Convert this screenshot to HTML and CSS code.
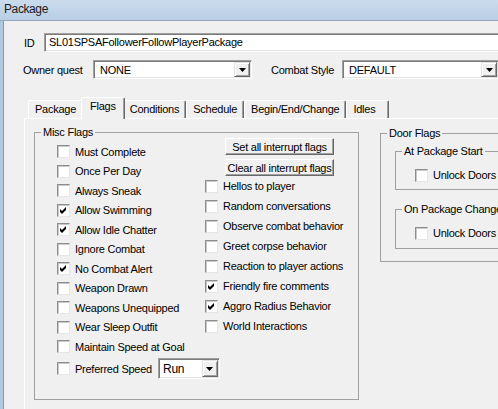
FILE: index.html
```html
<!DOCTYPE html>
<html lang="en">

<head>
    <meta charset="UTF-8">
    <title>Package</title>

    <link rel="stylesheet" href="styles.css">

</head>

<body>
    <div class="window">
        <div class="titlebar">Package</div>

        <div class="frame">
            <div class="frame-edge"></div>

            <div class="client">
                <div class="row id-row">
                    <span class="lbl lbl-id">ID</span>
                    <div class="edit">SL01SPSAFollowerFollowPlayerPackage</div>
                </div>

                <div class="row owner-row">
                    <span class="lbl lbl-quest">Owner quest</span>
                    <div class="combo combo-quest">
                        <span class="combo-text">NONE</span>
                        <span class="drop"><svg width="7" height="4" viewBox="0 0 7 4"><polygon points="0,0 7,0 3.5,4" fill="#000"/></svg></span>
                    </div>
                    <span class="lbl lbl-style">Combat Style</span>
                    <div class="combo combo-style">
                        <span class="combo-text">DEFAULT</span>
                        <span class="drop"><svg width="7" height="4" viewBox="0 0 7 4"><polygon points="0,0 7,0 3.5,4" fill="#000"/></svg></span>
                    </div>
                </div>

                <nav class="tabs">
                    <div class="tab">Package</div>
                    <div class="tab valgt">Flags</div>
                    <div class="tab">Conditions</div>
                    <div class="tab">Schedule</div>
                    <div class="tab">Begin/End/Change</div>
                    <div class="tab tab-idles">Idles</div>
                </nav>

                <section class="panel">
                    <fieldset class="group misc">
                        <legend>Misc Flags</legend>
                        <div class="misc-cols">
                            <div class="col-left">
                                <div class="check"><span class="box"></span>Must Complete</div>
                                <div class="check"><span class="box"></span>Once Per Day</div>
                                <div class="check"><span class="box"></span>Always Sneak</div>
                                <div class="check"><span class="box on"></span>Allow Swimming</div>
                                <div class="check"><span class="box on"></span>Allow Idle Chatter</div>
                                <div class="check"><span class="box"></span>Ignore Combat</div>
                                <div class="check"><span class="box on"></span>No Combat Alert</div>
                                <div class="check"><span class="box"></span>Weapon Drawn</div>
                                <div class="check"><span class="box"></span>Weapons Unequipped</div>
                                <div class="check"><span class="box"></span>Wear Sleep Outfit</div>
                                <div class="check"><span class="box"></span>Maintain Speed at Goal</div>
                                <div class="check speed">
                                    <span class="box"></span>Preferred Speed
                                    <div class="combo combo-speed">
                                        <span class="combo-text">Run</span>
                                        <span class="drop"><svg width="7" height="4" viewBox="0 0 7 4"><polygon points="0,0 7,0 3.5,4" fill="#000"/></svg></span>
                                    </div>
                                </div>
                            </div>

                            <div class="col-right">
                                <button class="btn">Set all interrupt flags</button>
                                <button class="btn btn-second">Clear all interrupt flags</button>
                                <div class="check wide"><span class="box"></span>Hellos to player</div>
                                <div class="check wide"><span class="box"></span>Random conversations</div>
                                <div class="check wide"><span class="box"></span>Observe combat behavior</div>
                                <div class="check wide"><span class="box"></span>Greet corpse behavior</div>
                                <div class="check wide"><span class="box"></span>Reaction to player actions</div>
                                <div class="check wide"><span class="box on"></span>Friendly fire comments</div>
                                <div class="check wide"><span class="box on"></span>Aggro Radius Behavior</div>
                                <div class="check wide"><span class="box"></span>World Interactions</div>
                            </div>
                        </div>
                    </fieldset>

                    <fieldset class="group door">
                        <legend>Door Flags</legend>
                        <fieldset class="group sub sub-start">
                            <legend>At Package Start</legend>
                            <div class="check"><span class="box"></span>Unlock Doors</div>
                        </fieldset>
                        <fieldset class="group sub sub-change">
                            <legend>On Package Change</legend>
                            <div class="check"><span class="box"></span>Unlock Doors</div>
                        </fieldset>
                    </fieldset>
                </section>
            </div>
        </div>
    </div>

    <script>
        // tick mark for every checked box
        document.querySelectorAll(".box.on").forEach(elm => {
            elm.innerHTML = '<svg width="7" height="7" viewBox="0 0 7 7"><polygon points="0,2 2,4 6,0 6,3 2,7 0,5" fill="#000"/></svg>';
        })
    </script>

</body></html>
```

FILE: styles.css
```css
body {
    margin: 0;
    width: 498px;
    height: 409px;
    overflow: hidden;
    background-color: #f0f0f0;
    font-family: "Liberation Sans", Arial, sans-serif;
    font-size: 11px;
    letter-spacing: -0.25px;
    color: #000;
}

.window {
    display: flex;
    flex-direction: column;
    height: 409px;
}

.titlebar {
    height: 20px;
    line-height: 18px;
    padding-left: 4px;
    font-size: 12px;
    letter-spacing: -0.4px;
    color: #1b1b1b;
    background: linear-gradient(#cadbed, #bacfe5);
    border-bottom: 1px solid #93a6bc;
    flex: none;
}

.frame {
    display: flex;
    flex: 1;
    min-height: 0;
}

.frame-edge {
    width: 3px;
    background-color: #b2c8e0;
    border-right: 1px solid #8599b1;
    flex: none;
}

.client {
    flex: 1;
    display: flex;
    flex-direction: column;
    padding: 12px 0 0 20px;
    min-width: 0;
}

.row {
    display: flex;
    align-items: center;
    height: 19px;
    flex: none;
}

.lbl {
    flex: none;
    white-space: nowrap;
}

.lbl-id {
    width: 20px;
}

.owner-row {
    margin-top: 8px;
}

.lbl-quest {
    width: 70px;
    margin-left: -1px;
}

.lbl-style {
    width: 71px;
    margin-left: 19px;
}

/* sunken white fields */
.edit,
.combo {
    box-sizing: border-box;
    height: 19px;
    background-color: #fff;
    border: 1px solid;
    border-color: #a0a0a0 #fff #fff #a0a0a0;
    box-shadow: inset 1px 1px 0 #7a7a7a, inset -1px -1px 0 #e3e3e3;
    flex: none;
}

.edit {
    width: 470px;
    padding-left: 4px;
    line-height: 17px;
    white-space: nowrap;
}

.combo {
    display: flex;
    align-items: center;
    padding: 1px;
}

.combo-text {
    flex: 1;
    padding-left: 5px;
    white-space: nowrap;
}

.combo-quest {
    width: 159px;
}

.combo-style {
    width: 157px;
}

.drop {
    box-sizing: border-box;
    width: 16px;
    height: 15px;
    display: flex;
    align-items: center;
    justify-content: center;
    background-color: #f0f0f0;
    border: 1px solid;
    border-color: #e3e3e3 #696969 #696969 #e3e3e3;
    box-shadow: inset 1px 1px 0 #fff, inset -1px -1px 0 #a0a0a0;
}

.drop svg {
    display: block;
}

/* tab strip */
.tabs {
    display: flex;
    align-items: flex-end;
    height: 21px;
    margin-top: 18px;
    padding-left: 4px;
    flex: none;
}

.tab {
    box-sizing: border-box;
    height: 18px;
    line-height: 17px;
    padding: 0 6px;
    border-top: 1px solid #fff;
    border-left: 1px solid #fff;
    border-right: 1px solid #696969;
    border-radius: 2px 2px 0 0;
    box-shadow: inset -1px 0 0 #a0a0a0;
    white-space: nowrap;
}

.tab.valgt {
    position: relative;
    z-index: 1;
    height: 22px;
    margin: 0 -2px -1px;
    padding: 0 8px 4px;
    line-height: 16px;
    background-color: #f0f0f0;
}

.tab-idles {
    padding-right: 13px;
}

.panel {
    flex: 1;
    display: flex;
    align-items: flex-start;
    padding: 7px 0 0 9px;
    border-top: 1px solid #fff;
    border-left: 1px solid #fff;
}

/* group boxes */
.group {
    box-sizing: border-box;
    margin: 0;
    padding: 0;
    border: 1px solid #a0a0a0;
    flex: none;
}

.group legend {
    margin-left: 6px;
    padding: 0 2px;
    line-height: 13px;
    white-space: nowrap;
}

.misc {
    width: 325px;
    height: 274px;
}

.misc-cols {
    display: grid;
    grid-template-columns: 170px 1fr;
}

.col-left {
    padding: 3px 0 0 22px;
}

.col-right {
    margin-top: -1px;
}

.check {
    display: flex;
    align-items: center;
    height: 19.5px;
    white-space: nowrap;
}

.check.wide {
    height: 20px;
}

.box {
    box-sizing: border-box;
    width: 13px;
    height: 13px;
    margin-right: 5px;
    display: flex;
    align-items: center;
    justify-content: center;
    background-color: #fff;
    border: 1px solid;
    border-color: #8d8d8d #e6e6e6 #e6e6e6 #8d8d8d;
    box-shadow: inset 1px 1px 0 #c9c9c9;
    flex: none;
}

.box svg {
    display: block;
}

.speed {
    height: 22px;
    margin-top: 1px;
}

.combo-speed {
    width: 62px;
    height: 21px;
    margin-left: 6px;
}

.combo-speed .combo-text {
    font-size: 12px;
    padding-left: 3px;
}

.combo-speed .drop {
    height: 17px;
}

.btn {
    box-sizing: border-box;
    display: block;
    width: 109px;
    height: 17px;
    margin-left: 20px;
    padding: 0;
    font: inherit;
    letter-spacing: inherit;
    color: #000;
    background-color: #f0f0f0;
    border: 1px solid;
    border-color: #fff #696969 #696969 #fff;
    box-shadow: inset -1px -1px 0 #a0a0a0;
}

.btn-second {
    margin-top: 4px;
}

.door {
    width: 180px;
    height: 135px;
    margin: 1px 0 0 21px;
}

.sub {
    width: 160px;
    margin-left: 14px;
    padding-top: 7px;
}

.sub .check {
    height: 20px;
    margin-left: 19px;
}

.sub-start {
    height: 45px;
    margin-top: 5px;
}

.sub-change {
    height: 46px;
    margin-top: 13px;
}
```
